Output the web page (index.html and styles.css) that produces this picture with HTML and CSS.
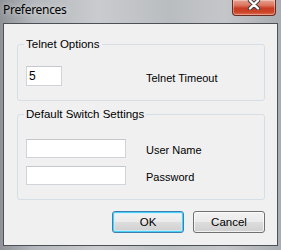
FILE: index.html
```html
<!DOCTYPE html>
<html>
<head>
<meta charset="utf-8">
<link rel="stylesheet" href="styles.css">
</head>
<body>
<div class="window">
  <div class="titlebar">
    <span class="title">Preferences</span>
    <div class="close">
      <svg width="16" height="11" viewBox="0 0 16 11">
        <path d="M4 1.5 L12 9.5 M12 1.5 L4 9.5" stroke="#3b3b3b" stroke-width="4.2" stroke-linecap="round"/>
        <path d="M4 1.5 L12 9.5 M12 1.5 L4 9.5" stroke="#ffffff" stroke-width="2.4" stroke-linecap="round"/>
      </svg>
    </div>
  </div>
  <div class="client">
    <fieldset class="group g1">
      <legend>Telnet Options</legend>
      <div class="grid">
        <div class="input small">5</div>
        <span class="label">Telnet Timeout</span>
      </div>
    </fieldset>
    <fieldset class="group g2">
      <legend>Default Switch Settings</legend>
      <div class="grid rows">
        <div class="input wide"></div>
        <span class="label">User Name</span>
        <div class="input wide"></div>
        <span class="label">Password</span>
      </div>
    </fieldset>
    <div class="buttons">
      <button class="btn focused">OK</button>
      <button class="btn">Cancel</button>
    </div>
  </div>
</div>
</body>
</html>
```
FILE: styles.css
```css
html, body {
  margin: 0;
  padding: 0;
  width: 281px;
  height: 250px;
  overflow: hidden;
}
.window {
  width: 281px;
  height: 250px;
  box-sizing: border-box;
  padding: 0 3px 4px 3px;
  display: flex;
  flex-direction: column;
  background: linear-gradient(to right, #8f9398 0%, #b4b7bb 12%, #c9cbce 35%, #babdc0 60%, #c4c6c9 80%, #a9acb0 100%);
  font-family: "Liberation Sans", Arial, sans-serif;
  font-size: 11px;
  color: #000;
}
.titlebar {
  height: 23px;
  display: flex;
  align-items: flex-start;
  justify-content: space-between;
  flex: none;
}
.title {
  font-family: "Noto Sans", "Open Sans", sans-serif;
  font-size: 12px;
  line-height: 14px;
  margin-top: 3px;
  letter-spacing: -0.3px;
  color: #000;
  text-shadow: 0 0 6px rgba(255,255,255,0.7);
}
.close {
  width: 44px;
  height: 16px;
  margin-right: 2px;
  box-sizing: border-box;
  border: 1px solid #6b2b20;
  border-top: none;
  border-radius: 0 0 4px 4px;
  background: linear-gradient(#e6a08f 0%, #dc7660 35%, #c73c22 55%, #cb4428 80%, #dc6e53 100%);
  box-shadow: inset 0 0 0 1px rgba(255,255,255,0.35);
  display: flex;
  justify-content: center;
  align-items: flex-start;
}
.close svg { display: block; margin-top: -1px; }
.client {
  flex: 1;
  box-sizing: border-box;
  border: 1px solid #4c5157;
  background: #f0f0f0;
  padding: 14px 12px 0 13px;
  display: flex;
  flex-direction: column;
}
.group {
  margin: 0;
  padding: 0 8px 0 8px;
  border: 1px solid #d5dfe5;
  border-radius: 3px;
  min-width: 0;
}
.group legend {
  padding: 0 2px;
  margin-left: -2px;
  font-size: 11.5px;
  line-height: 13px;
  color: #000;
  font-family: "Liberation Sans", Arial, sans-serif;
}
.g1 { padding-top: 15px; padding-bottom: 14px; height: 63px; box-sizing: border-box; }
.g2 { margin-top: 7px; padding-top: 18px; padding-bottom: 14px; }
.grid {
  display: grid;
  grid-template-columns: 120px 1fr;
  align-items: center;
}
.grid.rows { row-gap: 8px; }
.input {
  box-sizing: border-box;
  background: #fff;
  border: 1px solid #d0d3d7;
  border-top-color: #c4c7cb;
  height: 20px;
  font-size: 12px;
  line-height: 18px;
  padding-left: 2px;
}
.input.small { width: 36px; }
.input.wide { width: 100px; height: 19px; }
.label {
  font-size: 11px;
  line-height: 14px;
  padding-top: 3px;
}
.buttons {
  display: flex;
  justify-content: flex-end;
  gap: 9px;
  margin-top: 11px;
}
.btn {
  width: 72px;
  height: 22px;
  box-sizing: border-box;
  border: 1px solid #707070;
  border-radius: 3px;
  background: linear-gradient(#f2f2f2 0%, #ebebeb 48%, #dddddd 52%, #cfcfcf 100%);
  box-shadow: inset 0 0 0 1px rgba(255,255,255,0.7);
  font-family: "Liberation Sans", Arial, sans-serif;
  font-size: 11.5px;
  color: #000;
  padding: 0;
}
.btn.focused {
  border-color: #3c7fb1;
  box-shadow: inset 0 0 0 1px #48d1f8, inset 0 0 0 2px rgba(200,240,255,0.6);
}
```
